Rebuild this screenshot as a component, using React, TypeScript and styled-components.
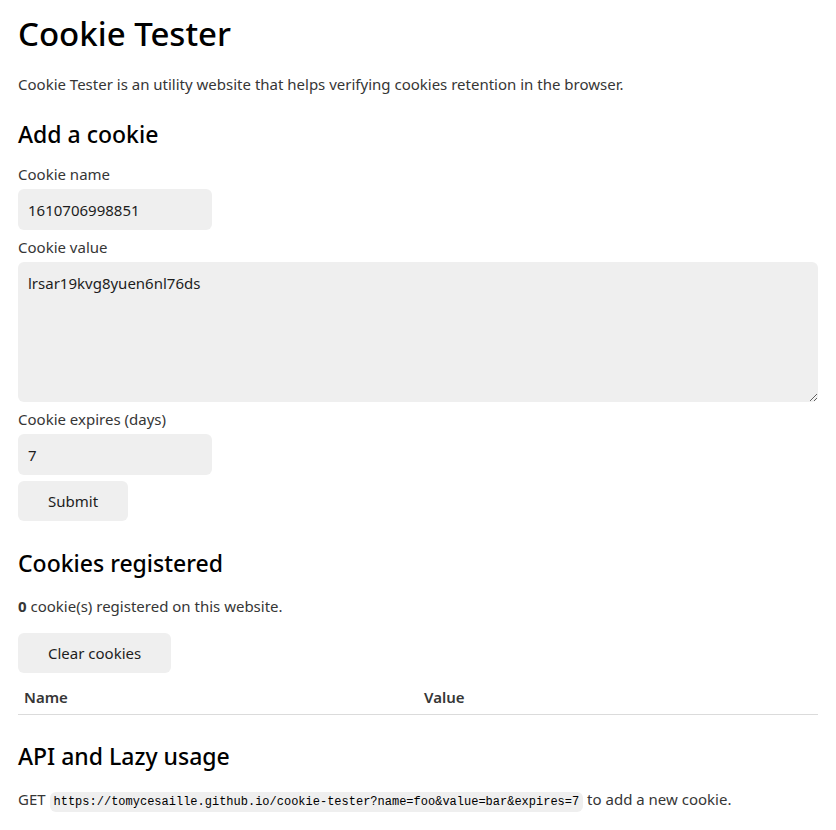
import React from "react";
import styled, { createGlobalStyle } from "styled-components";

const Global = createGlobalStyle`
  html, body { margin: 0; padding: 0; background: #fff; }
  body {
    font-family: "Noto Sans", "Open Sans", sans-serif;
    font-size: 15px;
    line-height: 22px;
    color: #363636;
  }
  * { box-sizing: border-box; }
`;

const Page = styled.main`
  width: 800px;
  margin: 0 auto;
  padding: 14px 0 0;
`;

const Title = styled.h1`
  margin: 0;
  font-size: 33px;
  line-height: 40px;
  font-weight: 500;
  color: #000;
`;

const Lead = styled.p`
  margin: 19px 0 0;
`;

const SectionTitle = styled.h2<{ $top: number; $bottom: number }>`
  margin: ${(p) => p.$top}px 0 ${(p) => p.$bottom}px;
  font-size: 23px;
  line-height: 32px;
  font-weight: 500;
  color: #000;
`;

const Form = styled.form`
  display: flex;
  flex-direction: column;
  align-items: flex-start;
`;

const Label = styled.label`
  display: inline-block;
  margin-bottom: 4px;
`;

const Input = styled.input`
  display: block;
  width: 194px;
  height: 41px;
  padding: 10px;
  margin: 0 0 6px;
  border: none;
  border-radius: 6px;
  background: #efefef;
  color: #1d1d1d;
  font: inherit;
  outline: none;
`;

const TextArea = styled.textarea`
  display: block;
  width: 100%;
  height: 140px;
  padding: 10px;
  margin: 0 0 6px;
  border: none;
  border-radius: 6px;
  background: #efefef;
  color: #1d1d1d;
  font: inherit;
  outline: none;
  resize: vertical;
`;

const Button = styled.button`
  display: block;
  height: 40px;
  padding: 0 30px;
  border: none;
  border-radius: 6px;
  background: #efefef;
  color: #1d1d1d;
  font: inherit;
  cursor: pointer;
`;

const Text = styled.p`
  margin: 0 0 16px;
`;

const Table = styled.table`
  width: 100%;
  margin-top: 7px;
  border-collapse: collapse;
  table-layout: fixed;
`;

const Th = styled.th`
  text-align: left;
  padding: 6px;
  font-weight: 600;
  color: #363636;
  border-bottom: 1px solid #dbdbdb;
`;

const Code = styled.code`
  font-family: "Liberation Mono", "DejaVu Sans Mono", monospace;
  font-size: 12px;
  background: #efefef;
  padding: 3px 4px;
  border-radius: 6px;
  color: #000;
`;

export default function App() {
  return (
    <>
      <Global />
      <Page>
        <Title>Cookie Tester</Title>
        <Lead>Cookie Tester is an utility website that helps verifying cookies retention in the browser.</Lead>

        <SectionTitle $top={23} $bottom={13}>Add a cookie</SectionTitle>
        <Form onSubmit={(e) => e.preventDefault()}>
          <Label htmlFor="name">Cookie name</Label>
          <Input id="name" defaultValue="1610706998851" />
          <Label htmlFor="value">Cookie value</Label>
          <TextArea id="value" defaultValue="lrsar19kvg8yuen6nl76ds" />
          <Label htmlFor="expires">Cookie expires (days)</Label>
          <Input id="expires" type="number" defaultValue="7" />
          <Button type="submit">Submit</Button>
        </Form>

        <SectionTitle $top={26} $bottom={16}>Cookies registered</SectionTitle>
        <Text>
          <strong>0</strong> cookie(s) registered on this website.
        </Text>
        <Button>Clear cookies</Button>
        <Table>
          <thead>
            <tr>
              <Th>Name</Th>
              <Th>Value</Th>
            </tr>
          </thead>
        </Table>

        <SectionTitle $top={25} $bottom={16}>API and Lazy usage</SectionTitle>
        <Text>
          GET <Code>https://tomycesaille.github.io/cookie-tester?name=foo&amp;value=bar&amp;expires=7</Code> to add a new cookie.
        </Text>
      </Page>
    </>
  );
}
